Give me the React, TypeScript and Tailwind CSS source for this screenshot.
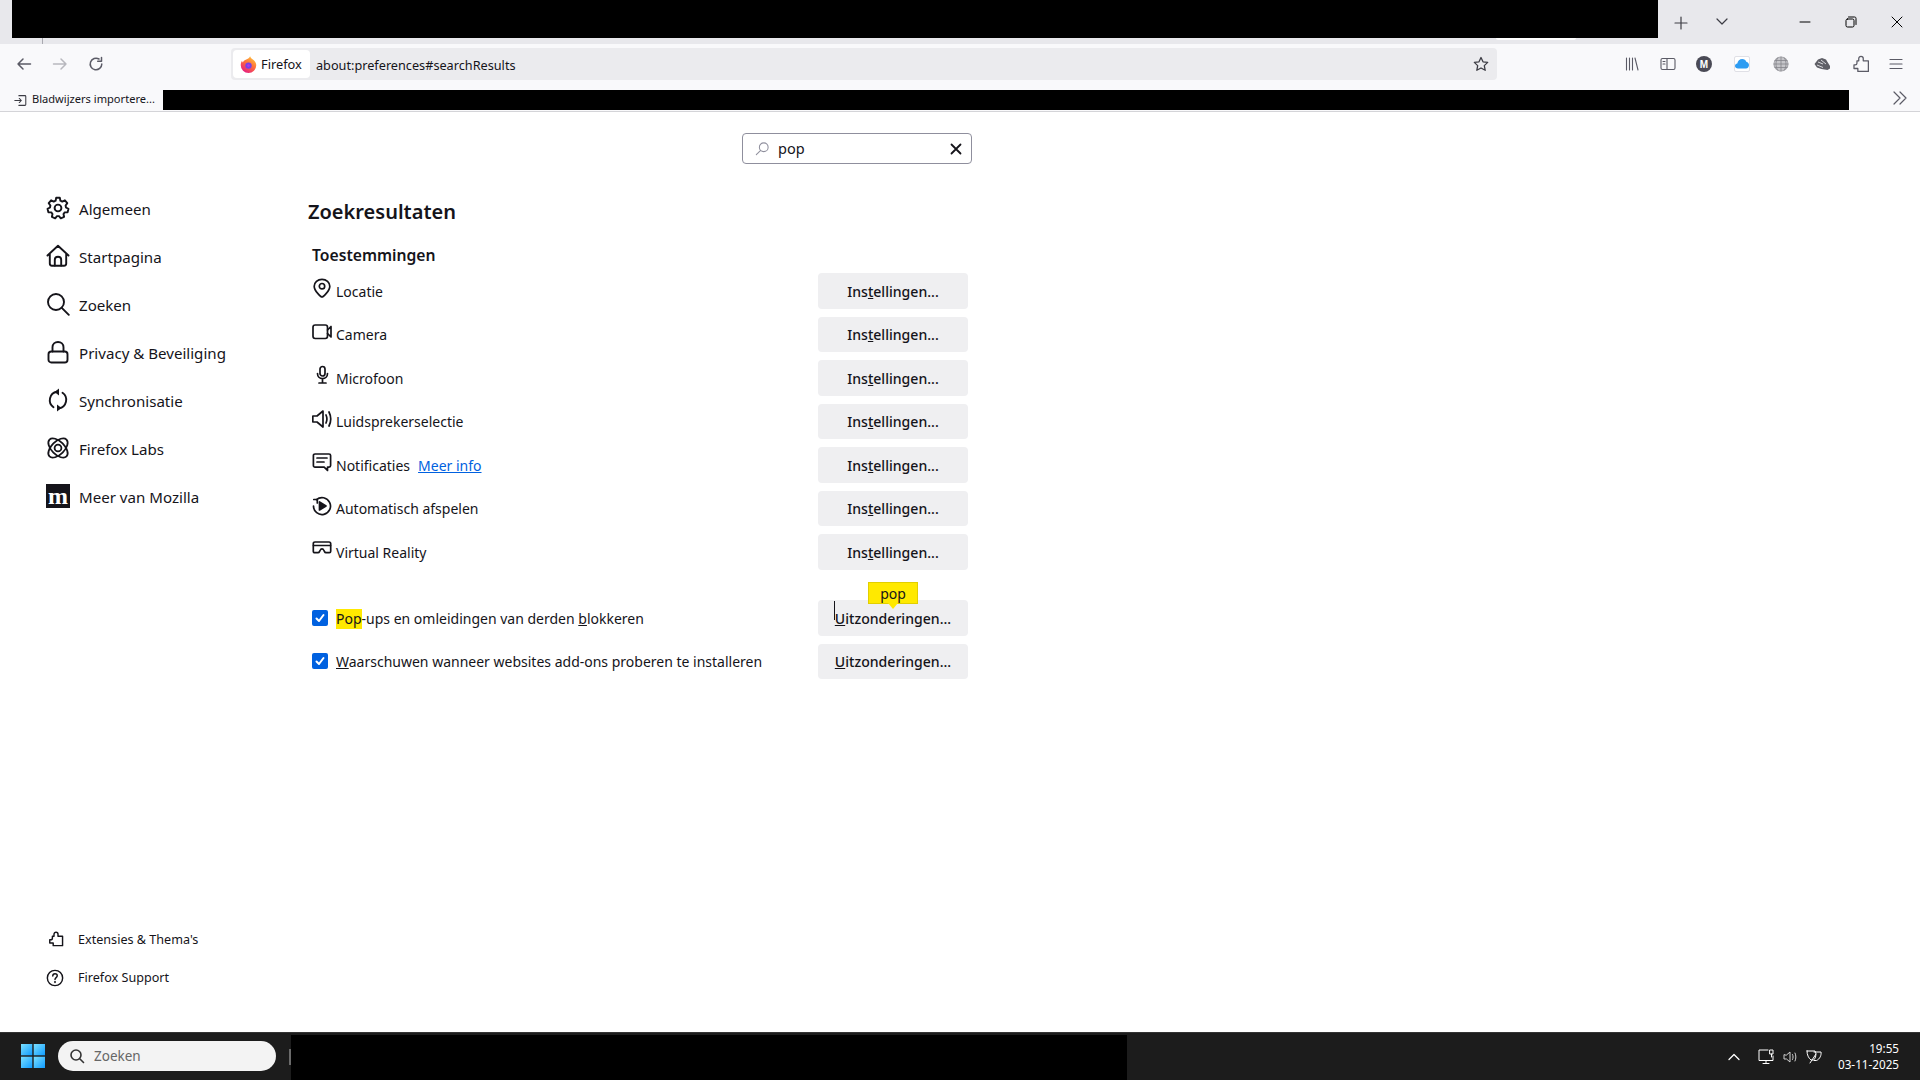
import type { ReactNode } from "react";

const FONT = "font-['Noto_Sans','Open_Sans',sans-serif]";

const Stroke = ({ size = 20, box = 20, width = 1.7, children, className = "" }: { size?: number; box?: number; width?: number; children: ReactNode; className?: string }) => (
  <svg width={size} height={size} viewBox={`0 0 ${box} ${box}`} fill="none" stroke="currentColor" strokeWidth={width} strokeLinecap="round" strokeLinejoin="round" className={className}>
    {children}
  </svg>
);

const PUZZLE = "M7.500 6.500V4a2.500 2.500 0 0 1 5 0v2.500h5.700v11.800H6.500V15H2.200v-4h1.300c1.300 0 2-.7 2-1.800V6.500z";

const GearIcon = () => (
  <Stroke size={24} box={24} width={1.9}>
    <path d="M10.2 1.800h3.600l.6 2.900 1.900.9 2.600-1.300 2.400 2.800-1.700 2.400.4 2 2.500 1.300-.9 3.500-2.900.1-1.200 1.600.6 2.800-3.300 1.500-1.800-2.200h-2l-1.800 2.200-3.300-1.500.6-2.800-1.200-1.600-2.900-.1-.9-3.500 2.500-1.300.4-2-1.700-2.400 2.400-2.800 2.600 1.300 1.900-.9z" />
    <circle cx="12" cy="12" r="3.400" />
  </Stroke>
);

const HomeIcon = () => (
  <Stroke size={24} box={24} width={1.9}>
    <path d="M1.500 11.500 12 1.800l10.500 9.700M3.800 9.500v10c0 1.300.9 2.200 2.200 2.200h12c1.300 0 2.200-.9 2.200-2.200v-10" />
    <path d="M8.800 21.500v-5.800c0-1.700 1.400-3 3.200-3s3.200 1.300 3.200 3v5.800" />
  </Stroke>
);

const SearchIcon = () => (
  <Stroke size={24} box={24} width={1.9}>
    <circle cx="10" cy="10" r="8" />
    <path d="m15.800 15.800 7 7" />
  </Stroke>
);

const LockIcon = () => (
  <Stroke size={24} box={24} width={1.9}>
    <path d="M6.500 11.500V7.300c0-3 2.400-5.300 5.500-5.300s5.500 2.300 5.500 5.300v4.200" />
    <rect x="2.500" y="11.500" width="19" height="11" rx="2.800" />
  </Stroke>
);

const SyncIcon = () => (
  <svg width="24" height="24" viewBox="0 0 24 24" fill="none" stroke="currentColor" strokeWidth="1.9" strokeLinecap="round">
    <path d="M7.500 19.200A8.500 8.500 0 0 1 11 3.800M16.500 4.800A8.500 8.500 0 0 1 13 20.200" />
    <path d="M13 .500v7l-4.500-3.500z" fill="currentColor" stroke="none" />
    <path d="M11 23.500v-7l4.500 3.500z" fill="currentColor" stroke="none" />
  </svg>
);

const LabsIcon = () => (
  <Stroke size={24} box={24} width={1.8}>
    <circle cx="12" cy="12" r="3.400" />
    <ellipse cx="12" cy="12" rx="12" ry="6.500" transform="rotate(45 12 12)" />
    <ellipse cx="12" cy="12" rx="12" ry="6.500" transform="rotate(-45 12 12)" />
  </Stroke>
);

const MozillaIcon = () => (
  <span className="flex h-[24px] w-[24px] items-center justify-center bg-[#15141a] font-['Liberation_Serif',serif] text-[24px] leading-none font-bold text-white">
    m
  </span>
);

const LocationIcon = () => (
  <Stroke>
    <path d="M10 19c-1 0-7.800-6-7.800-10.800C2.200 4.300 5.600 1.300 10 1.300s7.800 3 7.800 6.900C17.800 13 11 19 10 19z" />
    <circle cx="10" cy="8.200" r="2.700" />
  </Stroke>
);

const CameraIcon = () => (
  <Stroke>
    <rect x="1" y="3" width="14.500" height="13.500" rx="2.200" />
    <path d="M15.500 8 19 4.500v10.500l-3.500-3.500" />
  </Stroke>
);

const MicIcon = () => (
  <Stroke>
    <rect x="8" y="1.500" width="5" height="9.500" rx="2.500" />
    <path d="M5.500 8.500c0 3 2.200 5.200 5 5.200s5-2.200 5-5.200M10.500 13.700V18M7 18h7" />
  </Stroke>
);

const SpeakerIcon = () => (
  <Stroke>
    <path d="M.8 7v6h4.200l6 5V2L5 7z" />
    <path d="M14 6c1.200 2.600 1.200 5.400 0 8M17 3c2.200 4.400 2.200 9.600 0 14" />
  </Stroke>
);

const NotificationIcon = () => (
  <Stroke>
    <path d="M3 2h14c.9 0 1.600.7 1.600 1.600v10c0 .9-.7 1.600-1.600 1.600h-1.500v3.300l-3.300-3.300H3c-.9 0-1.600-.7-1.600-1.600v-10C1.400 2.700 2.100 2 3 2z" />
    <path d="M5 6h10M5 10h7" />
  </Stroke>
);

const AutoplayIcon = () => (
  <svg width="20" height="20" viewBox="0 0 20 20" fill="none" stroke="currentColor" strokeWidth="1.700" strokeLinecap="round" strokeLinejoin="round">
    <path d="M4.500 3.600A8.500 8.500 0 1 1 1.500 10" />
    <path d="M1.800 3.500h3.500v3.500" />
    <path d="M7.500 6v8l6.500-4z" fill="currentColor" />
  </svg>
);

const VrIcon = () => (
  <Stroke>
    <path d="M3 3h14c1 0 1.700.7 1.700 1.700v7.600c0 .8-.6 1.400-1.400 1.400h-3.300c-.7 0-1.200-.3-1.500-1l-.8-1.700c-.3-.8-.9-1.100-1.700-1.100s-1.400.3-1.700 1.100l-.8 1.700c-.3.7-.8 1-1.500 1H2.700c-.8 0-1.400-.6-1.400-1.400V4.700C1.300 3.700 2 3 3 3z" />
    <path d="M1.500 6.500h17" />
  </Stroke>
);

const FirefoxLogo = () => (
  <svg width="17" height="17" viewBox="0 0 16 16">
    <defs>
      <linearGradient id="ff" x1="0.8" y1="0" x2="0.2" y2="1">
        <stop offset="0" stopColor="#ffc93c" />
        <stop offset="0.45" stopColor="#ff7139" />
        <stop offset="1" stopColor="#e31587" />
      </linearGradient>
    </defs>
    <path d="M9.500.3c.3 1.500 1.700 2.300 2.900 3.300 1.800 1.400 2.900 3.100 2.900 5.100A7.300 7.300 0 0 1 .7 8.700c0-1.500.4-3 1.200-4.200.1.700.4 1.300.8 1.700C3.300 4.700 4 4 5.400 3.500 7.600 2.800 9 1.800 9.500.3z" fill="url(#ff)" />
    <circle cx="8" cy="9" r="3" fill="#7542e5" />
    <circle cx="8" cy="9" r="1.300" fill="#b833e1" />
  </svg>
);

const PlainPuzzle = ({ size, width = 1.7 }: { size: number; width?: number }) => (
  <Stroke size={size} width={width}>
    <path d={PUZZLE} />
  </Stroke>
);

const sideItems: [ReactNode, string][] = [
  [<GearIcon />, "Algemeen"],
  [<HomeIcon />, "Startpagina"],
  [<SearchIcon />, "Zoeken"],
  [<LockIcon />, "Privacy & Beveiliging"],
  [<SyncIcon />, "Synchronisatie"],
  [<LabsIcon />, "Firefox Labs"],
  [<MozillaIcon />, "Meer van Mozilla"],
];

const permissions: [ReactNode, string][] = [
  [<LocationIcon />, "Locatie"],
  [<CameraIcon />, "Camera"],
  [<MicIcon />, "Microfoon"],
  [<SpeakerIcon />, "Luidsprekerselectie"],
  [<NotificationIcon />, "Notificaties"],
  [<AutoplayIcon />, "Automatisch afspelen"],
  [<VrIcon />, "Virtual Reality"],
];

const Button = ({ children }: { children: ReactNode }) => (
  <div className="flex h-[35.5px] w-[150px] items-center justify-center rounded-[4px] bg-[#efeff1] pt-[1px] text-[14.1px] font-medium text-[#15141a]">
    {children}
  </div>
);

const Check = () => (
  <span className="flex h-[16px] w-[16px] items-center justify-center rounded-[2px] bg-[#0061e0]">
    <svg width="12" height="12" viewBox="0 0 12 12" fill="none" stroke="white" strokeWidth="2" strokeLinecap="round" strokeLinejoin="round">
      <path d="M2.500 6.500 5 9l4.500-6" />
    </svg>
  </span>
);

const TabStrip = () => (
  <div className="flex h-[44px] bg-[#e8e8ec]">
    <div className="ml-[12px] flex w-[1646px] flex-col">
      <div className="h-[38px] bg-black"></div>
      <div className="flex h-[6px]">
        <div className="ml-[30px] h-[6px] w-px bg-[#a9a9b0]"></div>
        <div className="ml-[1453px] h-[2px] w-[80px] rounded-b-[3px] bg-white"></div>
      </div>
    </div>
    <div className="flex h-[44px] items-start text-[#3c3c44]">
      <span className="mt-[15px] ml-[15px]">
        <Stroke size={16} box={16} width={1.2}><path d="M8 2v12M2 8h12" /></Stroke>
      </span>
      <span className="mt-[13px] ml-[25px]">
        <Stroke size={16} box={16} width={1.2}><path d="m3 6 5 5 5-5" /></Stroke>
      </span>
      <span className="mt-[14px] ml-[67px] text-black">
        <Stroke size={16} box={16} width={1}><path d="M3 8h10" /></Stroke>
      </span>
      <span className="mt-[14px] ml-[30px] text-black">
        <Stroke size={16} box={16} width={1}>
          <rect x="3" y="5" width="8" height="8" rx="1.500" />
          <path d="M5.500 3h6c1 0 1.500.5 1.500 1.500v6" />
        </Stroke>
      </span>
      <span className="mt-[14px] ml-[30px] text-black">
        <Stroke size={16} box={16} width={1}><path d="m3 3 10 10M13 3 3 13" /></Stroke>
      </span>
    </div>
  </div>
);

const NavBar = () => (
  <div className="flex h-[40px] items-center bg-[#f9f9fb] text-[#5b5b66]">
    <span className="ml-[16px]">
      <Stroke size={16} box={16} width={1.5}><path d="M14.500 8H2M7 3 2 8l5 5" /></Stroke>
    </span>
    <span className="ml-[20px] text-[#b8b8be]">
      <Stroke size={16} box={16} width={1.5}><path d="M1.500 8H14M9 3l5 5-5 5" /></Stroke>
    </span>
    <span className="ml-[20px]">
      <Stroke size={16} box={16} width={1.5}>
        <path d="M13.800 8A5.800 5.800 0 1 1 11 3" />
        <path d="M13.500 1.500v3.800H9.700" />
      </Stroke>
    </span>
    <div className="ml-[127px] flex h-[32px] w-[1266px] items-center rounded-[4px] bg-[#ebebee] pl-[2px] text-[#15141a]">
      <div className="flex h-[28px] w-[77px] items-center rounded-[4px] bg-white pl-[7px] text-[12.8px]">
        <FirefoxLogo />
        <span className="ml-[4px] pt-[2px]">Firefox</span>
      </div>
      <span className="ml-[6px] pt-[3px] text-[12.7px]">about:preferences#searchResults</span>
      <span className="mr-[8px] ml-auto text-[#3c3c44]">
        <Stroke size={16} box={16} width={1.3}>
          <path d="m8 1.500 2 4.300 4.700.6-3.400 3.200.9 4.700L8 12l-4.200 2.300.9-4.700L1.300 6.400 6 5.800z" />
        </Stroke>
      </span>
    </div>
    <span className="ml-[127px]">
      <Stroke size={16} box={16} width={1.1}><path d="M2.500 2v12M5.500 2v12M8.500 2v12M11 2l3 12" /></Stroke>
    </span>
    <span className="ml-[20px]">
      <Stroke size={16} box={16} width={1.1}>
        <rect x="1" y="2.500" width="14" height="11" rx="1.500" />
        <path d="M7 2.500v11M3 5.500h2M3 8h2" />
      </Stroke>
    </span>
    <span className="ml-[20px] flex h-[16px] w-[16px] items-center justify-center rounded-full bg-[#4a4a55] font-['Liberation_Sans',sans-serif] text-[10px] font-bold text-white">
      M
    </span>
    <span className="ml-[22px] flex h-[16px] w-[16px] items-center justify-center rounded-[2px] border border-[#e0e0e6] bg-white">
      <svg width="14" height="10" viewBox="0 0 14 10">
        <path d="M3 9.500C1.300 9.500 0 8.400 0 7c0-1.300 1-2.300 2.300-2.400C2.700 2 4.700 0 7.200 0c2 0 3.600 1.200 4.300 3 1.400.2 2.500 1.500 2.500 3.100 0 1.900-1.300 3.400-3 3.400z" fill="#2d9cf2" />
      </svg>
    </span>
    <span className="ml-[23px] text-[#a8a8ad]">
      <Stroke size={16} box={16} width={1.2}>
        <circle cx="8" cy="8" r="7" fill="#c6c6ca" />
        <path d="M1 8h14M2 4.500h12M2 11.500h12M8 1v14M4.500 2c-2 3.500-2 8.500 0 12M11.500 2c2 3.500 2 8.500 0 12" stroke="#85858b" strokeWidth="0.8" />
      </Stroke>
    </span>
    <span className="ml-[25px]">
      <svg width="16" height="14" viewBox="0 0 16 14">
        <path d="M.5 7 4 2.500 8 1l4 1.500 1.500 2.500L16 9v2.500l-2.500 1.500-6-1-4.500-1.500z" fill="#5f5f66" />
        <path d="M4 5 9 7M7 3l5 4M3 8l6 2.500" stroke="#d8d8dc" strokeWidth="1" fill="none" />
      </svg>
    </span>
    <span className="ml-[22px]">
      <PlainPuzzle size={18} width={1.4} />
    </span>
    <span className="ml-[18px]">
      <Stroke size={16} box={16} width={1.2}><path d="M2 3.500h12M2 8h12M2 12.500h12" /></Stroke>
    </span>
  </div>
);

const BookmarkBar = () => (
  <div className="flex h-[28px] border-b border-[#d4d4d8] bg-[#f9f9fb] pt-[6px]">
    <div className="flex h-[20px] items-center pl-[14px] text-[#3c3c44]">
      <Stroke size={13} box={16} width={1.3}>
        <path d="M6 2h7.500c.5 0 1 .5 1 1v10c0 .5-.5 1-1 1H6M1 8h8M6.500 5.500 9 8l-2.500 2.500" />
      </Stroke>
      <span className="ml-[5px] w-[131px] -translate-y-[1px] truncate text-[11.1px] text-[#15141a]">Bladwijzers importere...</span>
    </div>
    <div className="h-[20px] w-[1686px] bg-black"></div>
    <span className="ml-[43px] text-[#5b5b66]">
      <Stroke size={16} box={16} width={1.2}><path d="m2 2 6 6-6 6M8 2l6 6-6 6" /></Stroke>
    </span>
  </div>
);

const Sidebar = () => (
  <div className="flex w-[308px] flex-col justify-between pt-[73px] pb-[34px] pl-[46px] text-[#15141a]">
    <div className="flex flex-col">
      {sideItems.map(([icon, label]) => (
        <div key={label} className="flex h-[48px] items-center">
          <span className="flex w-[33px] -translate-y-[1px]">{icon}</span>
          <span className="text-[15.1px]">{label}</span>
        </div>
      ))}
    </div>
    <div className="flex flex-col">
      <div className="flex h-[38.5px] items-center">
        <span className="ml-[2px] flex w-[30px] -translate-y-[1px]"><PlainPuzzle size={16} width={1.8} /></span>
        <span className="text-[12.6px]">Extensies & Thema's</span>
      </div>
      <div className="flex h-[38.5px] items-center">
        <span className="flex w-[32px] -translate-y-[1px]">
          <Stroke size={18} box={20} width={1.6}>
            <circle cx="10" cy="10" r="8.500" />
            <path d="M7.500 7.800c0-1.500 1.100-2.500 2.500-2.500s2.500 1 2.500 2.300c0 2-2.500 2-2.500 4" />
            <circle cx="10" cy="14.500" r=".4" />
          </Stroke>
        </span>
        <span className="text-[12.6px]">Firefox Support</span>
      </div>
    </div>
  </div>
);

const Main = () => (
  <div className="flex w-[664px] flex-col pt-[21px] text-[#15141a]">
    <div className="ml-auto flex h-[31px] w-[230px] items-center rounded-[4px] border border-[#8f8f9d] pl-[12px]">
      <span className="text-[#8f8f9d]">
        <Stroke size={14} box={16} width={1.2}><circle cx="10" cy="6" r="5" /><path d="M6.500 9.500 1.500 14.500" /></Stroke>
      </span>
      <span className="ml-[9px] text-[14.5px]">pop</span>
      <span className="mr-[8px] ml-auto">
        <Stroke size={14} box={14} width={1.8}><path d="m2.500 2.500 9 9M11.500 2.500l-9 9" /></Stroke>
      </span>
    </div>
    <h1 className="mt-[33px] h-[30px] text-[20px] leading-[30px] font-semibold">Zoekresultaten</h1>
    <h2 className="mt-[16px] ml-[4px] h-[24px] text-[15.7px] leading-[24px] font-semibold">Toestemmingen</h2>
    <div className="mt-[6px] flex w-[660px] flex-col gap-[8px] pl-[4px]">
      {permissions.map(([icon, label]) => (
        <div key={label} className="flex items-center justify-between">
          <div className="flex items-center pt-[1px]">
            <span className="flex w-[24px] -translate-y-[3px]">{icon}</span>
            <span className="text-[14px]">{label}</span>
            {label === "Notificaties" && (
              <span className="ml-[8px] text-[14px] text-[#0061e0] underline">Meer info</span>
            )}
          </div>
          <Button>
            Ins<u>t</u>ellingen...
          </Button>
        </div>
      ))}
    </div>
    <div className="mt-[30.5px] flex w-[660px] flex-col gap-[8px] pl-[4px]">
      <div className="flex items-center justify-between">
        <div className="flex items-center">
          <span className="flex w-[24px]"><Check /></span>
          <span className="pt-[1px] text-[14px]">
            <span className="inline-block bg-[#ffe900] leading-[20px]">Pop</span>-ups en omleidingen van derden <u>b</u>lokkeren
          </span>
        </div>
        <div className="relative">
          <Button>
            <u>U</u>itzonderingen...
          </Button>
          <div className="absolute top-[1px] left-[16px] h-[19px] w-px bg-[#15141a]"></div>
          <div className="absolute -top-[18px] left-[50px] flex h-[22px] w-[50px] items-center justify-center border border-[#e2cf00] bg-[#ffe900] text-[14px]">
            pop
            <span className="absolute -bottom-[6px] left-[19px] h-0 w-0 border-x-[5px] border-t-[6px] border-x-transparent border-t-[#ffe900]"></span>
          </div>
        </div>
      </div>
      <div className="flex items-center justify-between">
        <div className="flex items-center">
          <span className="flex w-[24px]"><Check /></span>
          <span className="pt-[1px] text-[14px]">
            <u>W</u>aarschuwen wanneer websites add-ons proberen te installeren
          </span>
        </div>
        <Button>
          <u>U</u>itzonderingen...
        </Button>
      </div>
    </div>
  </div>
);

const TaskBar = () => (
  <div className="flex h-[48px] items-end border-t border-[#333] bg-[#1c1c1c]">
    <div className="flex h-[47px] items-center">
      <svg width="24" height="24" viewBox="0 0 24 24" className="ml-[21px] -translate-y-[1px]">
        <defs>
          <linearGradient id="win" x1="0" y1="0" x2="1" y2="1">
            <stop offset="0" stopColor="#7be0ff" />
            <stop offset="1" stopColor="#0f9bff" />
          </linearGradient>
        </defs>
        <rect x="0" y="0" width="11.3" height="11.3" fill="url(#win)" />
        <rect x="12.7" y="0" width="11.3" height="11.3" fill="url(#win)" />
        <rect x="0" y="12.7" width="11.3" height="11.3" fill="url(#win)" />
        <rect x="12.7" y="12.7" width="11.3" height="11.3" fill="url(#win)" />
      </svg>
      <div className="ml-[13px] flex h-[30px] w-[218px] -translate-y-[1px] items-center rounded-full bg-[#f3f3f3] pl-[11px] text-[#333]">
        <Stroke size={16} box={16} width={1.6}><circle cx="7" cy="7" r="5" /><path d="m11 11 3.500 3.500" /></Stroke>
        <span className="ml-[9px] pt-[1px] text-[13.5px] text-[#666]">Zoeken</span>
      </div>
      <div className="ml-[13px] h-[16px] w-[2px] bg-[#6a6a6a]"></div>
    </div>
    <div className="h-[45px] w-[836px] bg-black"></div>
    <div className="flex h-[47px] flex-1 items-center text-white">
      <span className="ml-[600px]">
        <Stroke size={14} box={14} width={1.3}><path d="m2 9.500 5-5 5 5" /></Stroke>
      </span>
      <span className="ml-[16px]">
        <Stroke size={18} box={18} width={1}>
          <path d="M11 2H2v10.500h14V8M6 15.500h6M9 12.500v3M13 2h3v4h-3zM14.500 6v3" />
        </Stroke>
      </span>
      <span className="ml-[7px] text-[#d0d0d0]">
        <Stroke size={16} box={16} width={1}>
          <path d="M2 6v4h2.500l3.500 3V3L4.500 6zM10.500 5.500c.8 1.600.8 3.400 0 5M13 4c1.200 2.500 1.200 5.500 0 8" />
        </Stroke>
      </span>
      <span className="ml-[7px]">
        <Stroke size={18} box={18} width={1}>
          <path d="M2 3h8c1.500 3 1 7-1.500 9H6C3.500 10 2 7 2 3zM9 4h7c.5 3-1 7-4.500 8.500H9M5 15l6-9" />
        </Stroke>
      </span>
      <div className="ml-[15px] flex -translate-y-[1px] flex-col items-end text-[11.7px] leading-[16px]">
        <span>19:55</span>
        <span>03-11-2025</span>
      </div>
    </div>
  </div>
);

export default function App() {
  return (
    <div className={`flex h-[1080px] w-[1920px] flex-col overflow-hidden bg-white ${FONT}`}>
      <TabStrip />
      <NavBar />
      <BookmarkBar />
      <div className="flex h-[920px]">
        <Sidebar />
        <Main />
      </div>
      <TaskBar />
    </div>
  );
}
